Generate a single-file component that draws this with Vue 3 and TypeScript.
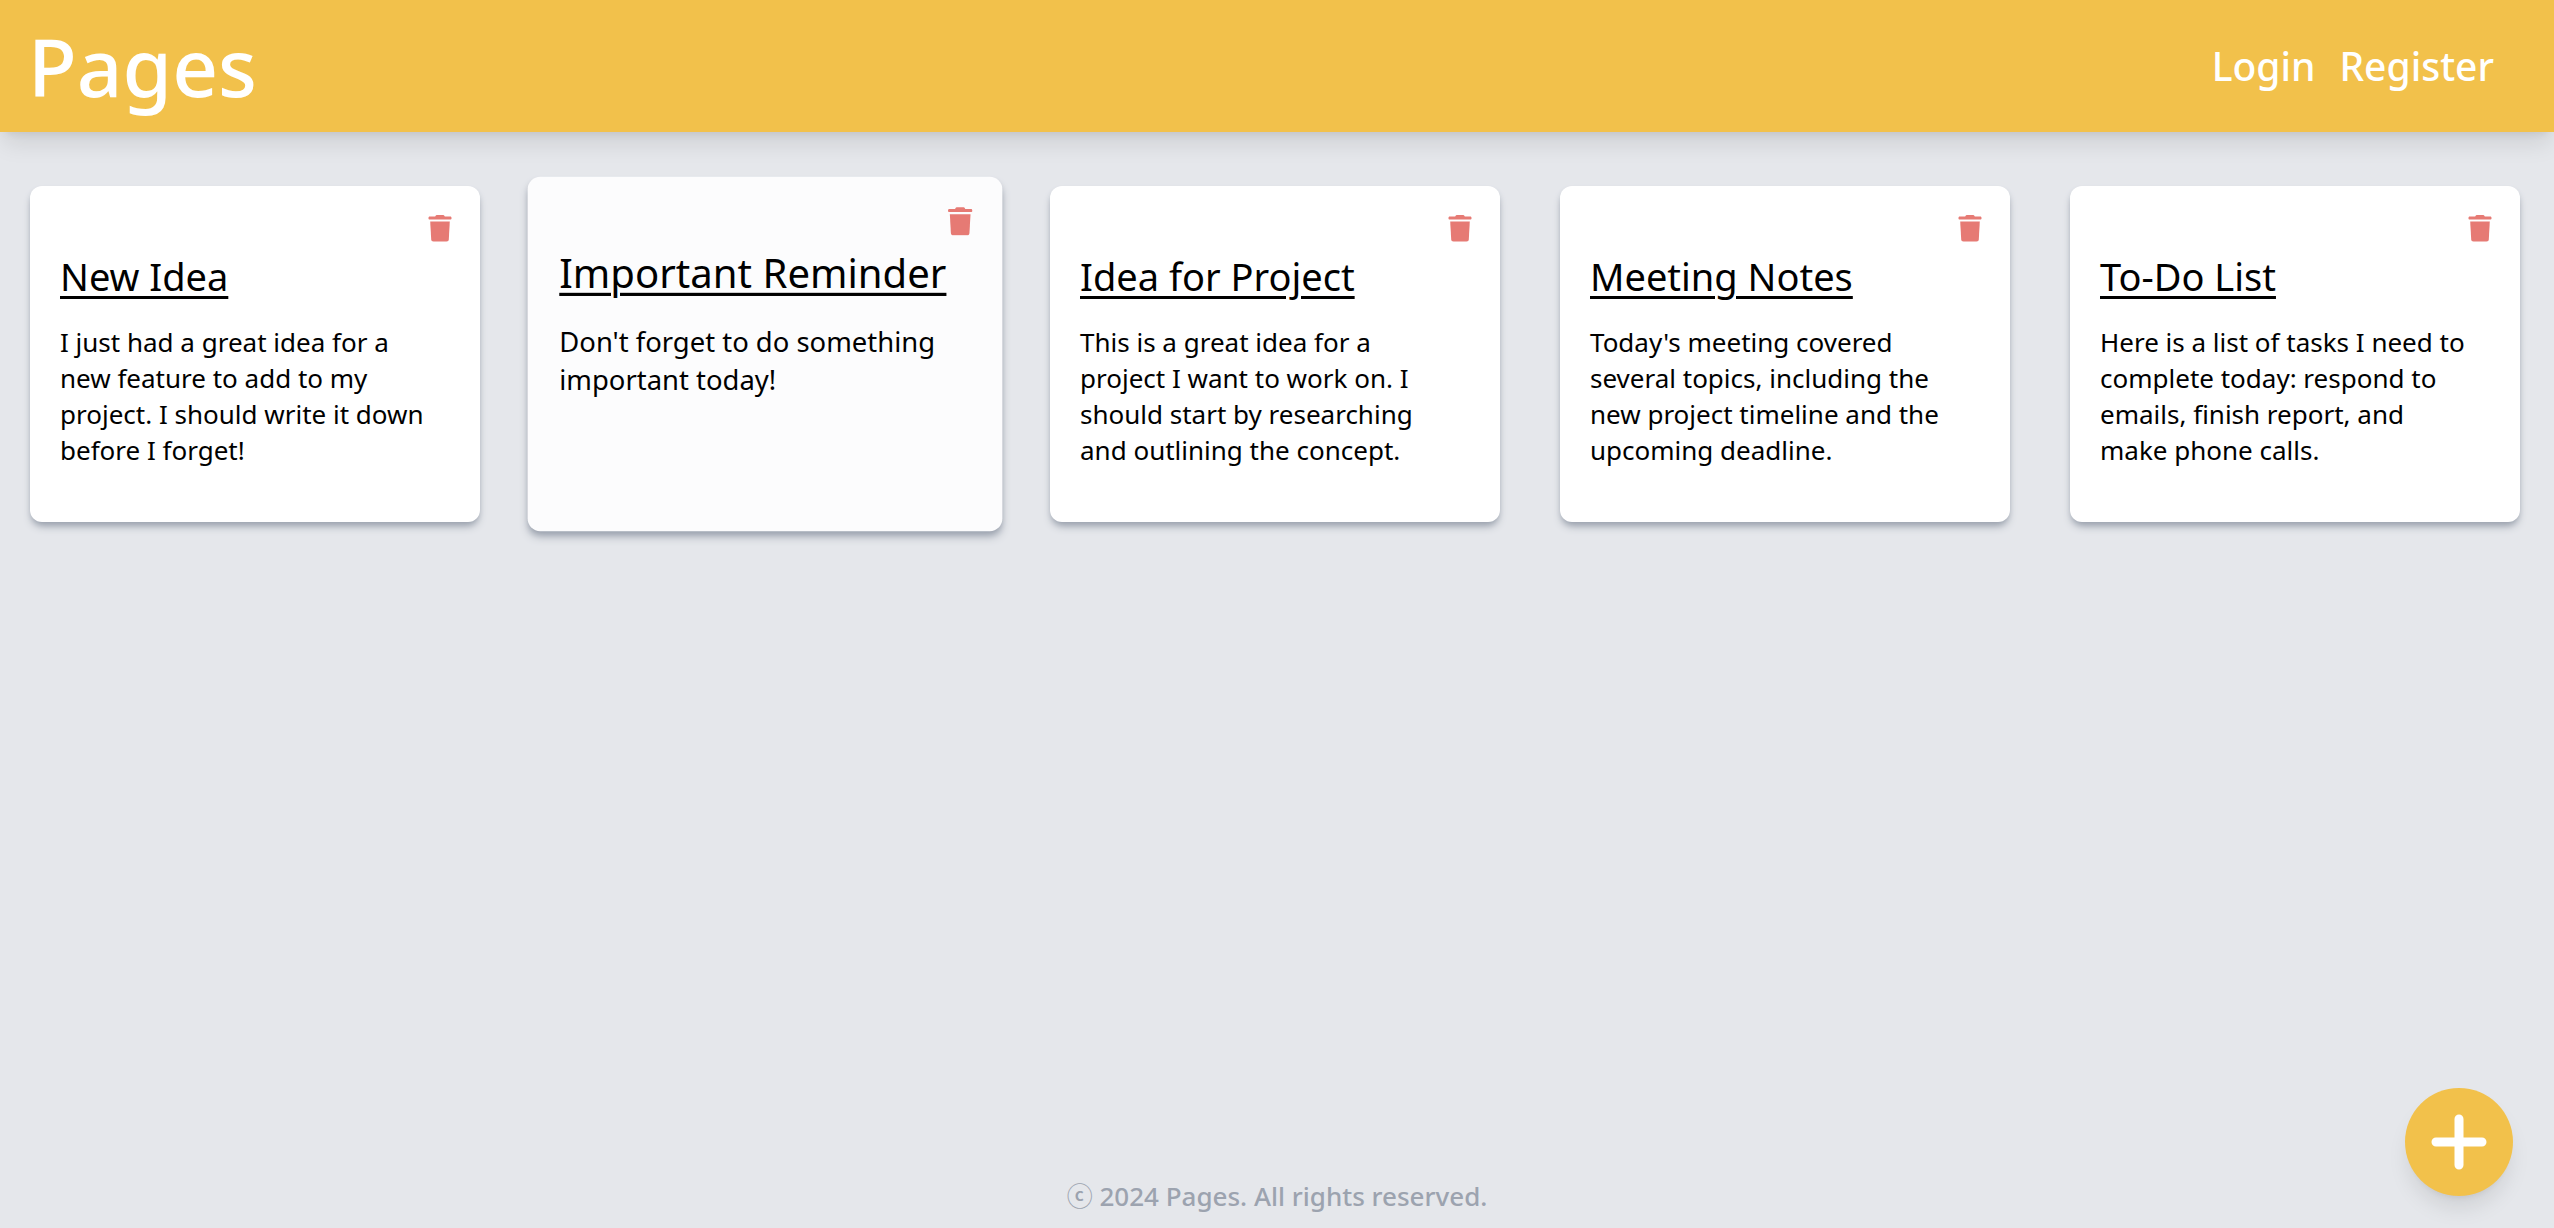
<script setup lang="ts">
import { ref } from 'vue'

interface Note {
  id: number
  title: string
  body: string
}

const notes = ref<Note[]>([
  { id: 1, title: 'New Idea', body: 'I just had a great idea for a new feature to add to my project. I should write it down before I forget!' },
  { id: 2, title: 'Important Reminder', body: "Don't forget to do something important today!" },
  { id: 3, title: 'Idea for Project', body: 'This is a great idea for a project I want to work on. I should start by researching and outlining the concept.' },
  { id: 4, title: 'Meeting Notes', body: "Today's meeting covered several topics, including the new project timeline and the upcoming deadline." },
  { id: 5, title: 'To-Do List', body: 'Here is a list of tasks I need to complete today: respond to emails, finish report, and make phone calls.' },
])

const activeId = ref(2)

function removeNote(id: number) {
  notes.value = notes.value.filter((note) => note.id !== id)
}
</script>

<template>
  <div class="page">
    <header class="header">
      <h1 class="brand">Pages</h1>
      <nav class="nav">
        <a href="#login">Login</a>
        <a href="#register">Register</a>
      </nav>
    </header>

    <main class="notes">
      <article
        v-for="note in notes"
        :key="note.id"
        class="note"
        :class="{ active: note.id === activeId }"
        @mouseenter="activeId = note.id"
      >
        <button class="delete" type="button" :aria-label="`Delete ${note.title}`" @click="removeNote(note.id)">
          <svg viewBox="0 0 24 28" width="24" height="28" aria-hidden="true">
            <path d="M1.700 2.500H7.200C7.700 1.400 8.400 1 9.400 1h5.200c1 0 1.700.400 2.200 1.500h5.500c.8 0 1.200.6 1.200 1.400v.5c0 .7-.5 1.100-1.200 1.100H1.700C1 5.500.5 5.100.5 4.400v-.5c0-.8.4-1.400 1.200-1.400Z" />
            <path d="M2.200 7.500H21.800L20.800 25.300C20.700 26.900 20 27.500 18.500 27.500H5.500C4 27.500 3.300 26.900 3.200 25.300Z" />
          </svg>
        </button>
        <h2 class="title">{{ note.title }}</h2>
        <p class="body">{{ note.body }}</p>
      </article>
    </main>

    <footer class="footer">ⓒ 2024 Pages. All rights reserved.</footer>

    <button class="add" type="button" aria-label="Add a note">
      <svg viewBox="0 0 56 56" width="56" height="56" aria-hidden="true">
        <path d="M28 5V51M5 28H51" />
      </svg>
    </button>
  </div>
</template>

<style>
body {
  background: #e5e7eb;
}
</style>

<style scoped>
.page {
  box-sizing: border-box;
  display: flex;
  flex-direction: column;
  min-height: 100vh;
  font-family: "Noto Sans", "Noto Sans CJK SC", sans-serif;
  color: #000;
}

.header {
  display: flex;
  align-items: center;
  justify-content: space-between;
  height: 132px;
  padding: 0 60px 0 28px;
  background: #f2c14b;
  color: #fff;
  box-shadow: 0 15px 22px -4px rgb(0 0 0 / 10%), 0 6px 9px -6px rgb(0 0 0 / 10%);
}

.brand {
  margin: 0;
  font-size: 80px;
  font-weight: 500;
  line-height: 96px;
}

.nav {
  display: flex;
  gap: 24px;
  font-size: 39px;
  font-weight: 500;
  line-height: 48px;
}

.nav a {
  color: inherit;
  text-decoration: none;
}

.notes {
  display: flex;
  flex-wrap: wrap;
  gap: 60px;
  padding: 54px 30px;
}

.note {
  position: relative;
  box-sizing: border-box;
  width: 450px;
  min-height: 336px;
  padding: 66px 30px 30px;
  border-radius: 12px;
  background: #fff;
  box-shadow: 0 6px 9px -2px #9ca3af, 0 3px 6px -3px #9ca3af;
}

.note.active {
  background: #fcfcfd;
  transform: scale(1.055);
}

.delete {
  position: absolute;
  top: 28px;
  right: 28px;
  display: flex;
  padding: 0;
  border: 0;
  background: none;
  cursor: pointer;
}

.delete svg {
  fill: #e67a74;
}

.title {
  margin: 0;
  font-size: 38px;
  font-weight: 400;
  line-height: 48px;
  text-decoration: underline;
  text-decoration-thickness: 3px;
  text-underline-offset: 5px;
}

.body {
  margin: 24px 0 0;
  padding-right: 20px;
  font-size: 26px;
  line-height: 36px;
}

.footer {
  margin-top: auto;
  padding-bottom: 14px;
  color: #9ca3af;
  font-size: 26px;
  font-weight: 500;
  line-height: 36px;
  text-align: center;
}

.add {
  position: fixed;
  right: 41px;
  bottom: 32px;
  display: flex;
  align-items: center;
  justify-content: center;
  width: 108px;
  height: 108px;
  padding: 0;
  border: 0;
  border-radius: 50%;
  background: #f2c14b;
  box-shadow: 0 15px 22px -4px rgb(0 0 0 / 10%), 0 6px 9px -6px rgb(0 0 0 / 10%);
  cursor: pointer;
}

.add svg {
  fill: none;
  stroke: #fff;
  stroke-width: 9;
  stroke-linecap: round;
}
</style>
